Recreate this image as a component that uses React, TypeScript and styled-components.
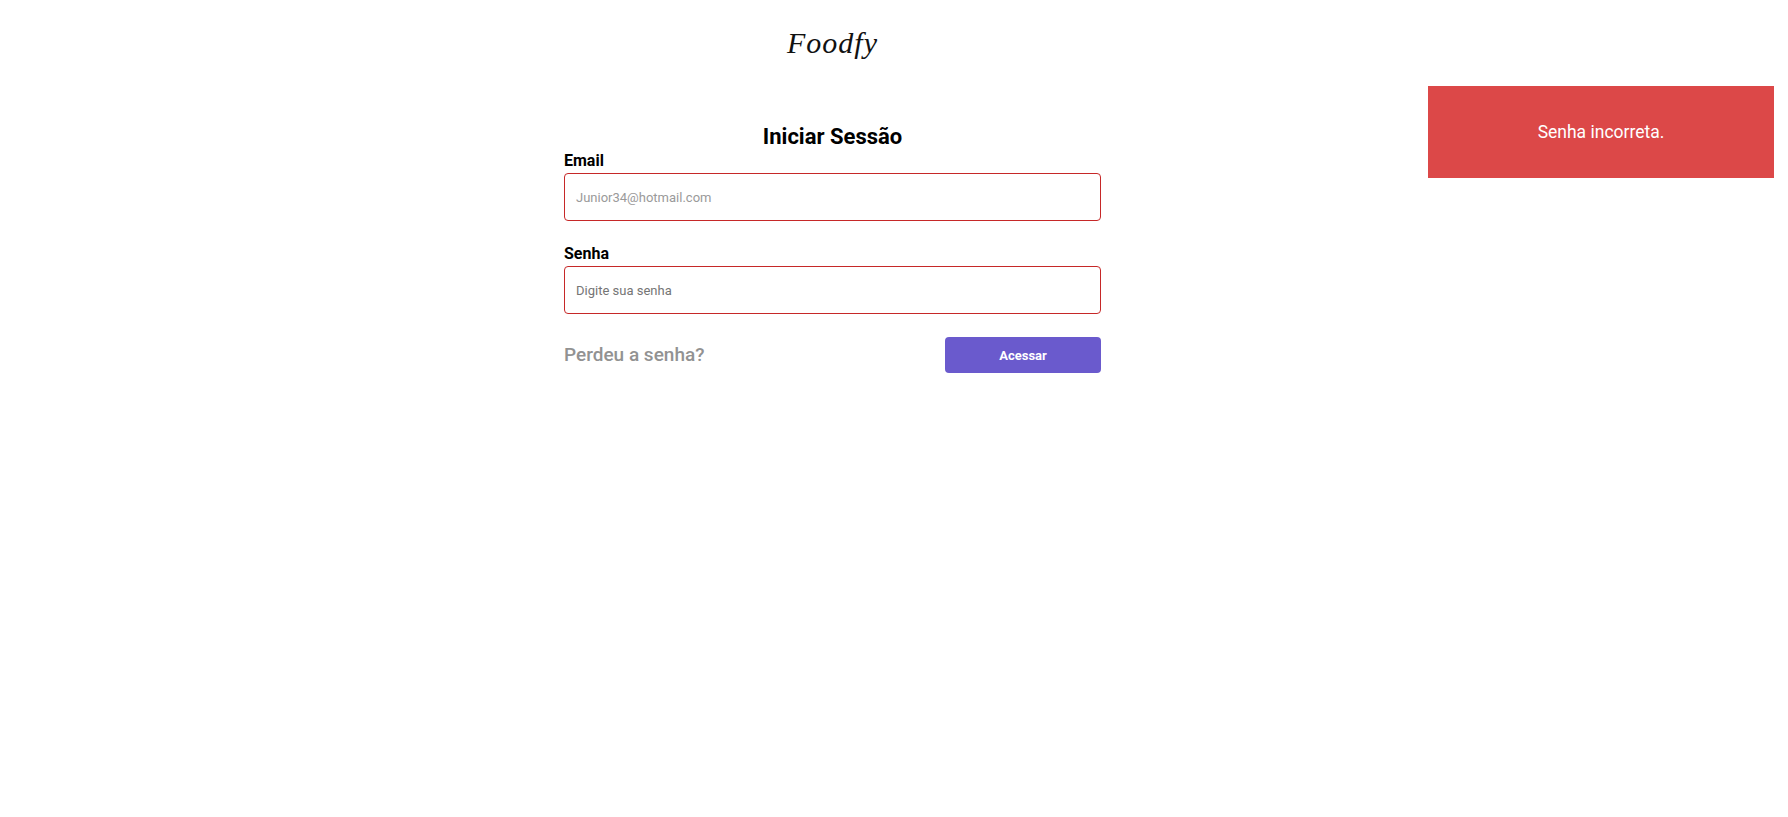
import React from "react";
import styled, { createGlobalStyle } from "styled-components";

const GlobalStyle = createGlobalStyle`
  body {
    margin: 0;
    background: #fff;
    font-family: Roboto, "Liberation Sans", Arial, sans-serif;
    color: #000;
  }
`;

const Page = styled.div`
  display: flex;
  flex-direction: column;
  align-items: center;
  padding-right: 123px;
  min-height: 817px;
  box-sizing: border-box;
`;

const Logo = styled.h1`
  margin: 26px 0 0;
  font-family: "Liberation Serif", "Times New Roman", serif;
  font-style: italic;
  font-weight: 400;
  font-size: 30px;
  line-height: 34px;
  letter-spacing: 1px;
  color: #111;
`;

const Form = styled.form`
  width: 537px;
  margin-top: 64px;
  display: flex;
  flex-direction: column;
`;

const Title = styled.h2`
  margin: 0 0 1px;
  text-align: center;
  font-size: 22px;
  line-height: 26px;
  font-weight: 700;
`;

const Field = styled.div`
  display: flex;
  flex-direction: column;
  margin-bottom: 23px;

  &:last-of-type {
    margin-bottom: 22px;
  }
`;

const Label = styled.label`
  font-size: 16px;
  line-height: 19px;
  font-weight: 700;
  margin-bottom: 3px;
`;

const Input = styled.input<{ $muted?: boolean }>`
  box-sizing: border-box;
  height: 48px;
  padding: 0 11px;
  border: 1px solid #c62828;
  border-radius: 4px;
  font-family: Roboto, "Liberation Sans", Arial, sans-serif;
  font-size: 13px;
  outline: none;

  &::placeholder {
    color: ${(p) => (p.$muted ? "#9a9a9a" : "#757575")};
  }
`;

const Actions = styled.div`
  display: flex;
  justify-content: space-between;
  align-items: center;
`;

const ForgotLink = styled.a`
  font-size: 19px;
  font-weight: 500;
  color: #929292;
  text-decoration: none;
  cursor: pointer;
  margin-bottom: 2px;
`;

const SubmitButton = styled.button`
  width: 156px;
  height: 36px;
  border: none;
  border-radius: 4px;
  background: #6a5acd;
  color: #fff;
  font-family: Roboto, "Liberation Sans", Arial, sans-serif;
  font-size: 13px;
  font-weight: 700;
  cursor: pointer;
`;

const Toast = styled.div`
  position: fixed;
  top: 86px;
  right: 14px;
  width: 346px;
  height: 92px;
  display: flex;
  align-items: center;
  justify-content: center;
  background: #dc4848;
  color: #fff;
  font-size: 17.5px;
`;

const App = () => {
  return (
    <>
      <GlobalStyle />
      <Page>
        <Logo>Foodfy</Logo>
        <Form onSubmit={(e) => e.preventDefault()}>
          <Title>Iniciar Sessão</Title>
          <Field>
            <Label htmlFor="email">Email</Label>
            <Input id="email" type="email" placeholder="Junior34@hotmail.com" $muted />
          </Field>
          <Field>
            <Label htmlFor="senha">Senha</Label>
            <Input id="senha" type="password" placeholder="Digite sua senha" />
          </Field>
          <Actions>
            <ForgotLink>Perdeu a senha?</ForgotLink>
            <SubmitButton type="submit">Acessar</SubmitButton>
          </Actions>
        </Form>
      </Page>
      <Toast>Senha incorreta.</Toast>
    </>
  );
};

export default App;
